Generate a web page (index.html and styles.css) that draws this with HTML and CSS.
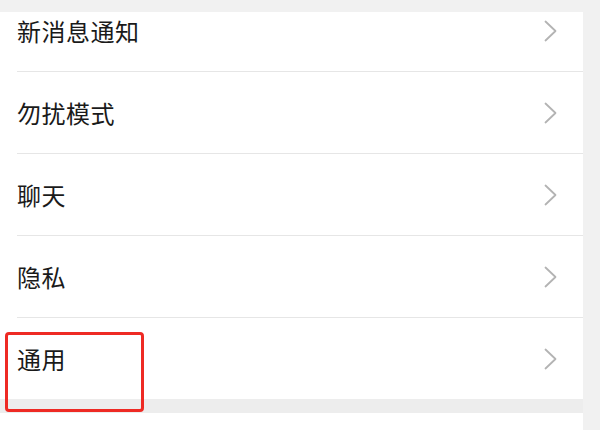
FILE: index.html
```html
<!DOCTYPE html>
<html lang="zh">
<head>
<meta charset="utf-8">
<link rel="stylesheet" href="styles.css">
</head>
<body>
<div class="page">
  <div class="panel">
    <div class="row first"><span class="label">新消息通知</span><svg class="chev" viewBox="0 0 13 22"><path d="M1.5 1.5 L11.5 11 L1.5 20.5" /></svg></div>
    <div class="row"><span class="label">勿扰模式</span><svg class="chev" viewBox="0 0 13 22"><path d="M1.5 1.5 L11.5 11 L1.5 20.5" /></svg></div>
    <div class="row"><span class="label">聊天</span><svg class="chev" viewBox="0 0 13 22"><path d="M1.5 1.5 L11.5 11 L1.5 20.5" /></svg></div>
    <div class="row"><span class="label">隐私</span><svg class="chev" viewBox="0 0 13 22"><path d="M1.5 1.5 L11.5 11 L1.5 20.5" /></svg></div>
    <div class="row last"><span class="label">通用</span><svg class="chev" viewBox="0 0 13 22"><path d="M1.5 1.5 L11.5 11 L1.5 20.5" /></svg></div>
    <div class="gap"></div>
    <div class="tail"></div>
    <div class="highlight"></div>
  </div>
</div>
</body>
</html>
```

FILE: styles.css
```css
html, body {
  margin: 0;
  padding: 0;
  background: #f1f1f1;
}
body {
  width: 600px;
  height: 430px;
  overflow: hidden;
  font-family: "Noto Sans CJK SC", "Noto Sans", sans-serif;
}
.page {
  padding-top: 12px;
  padding-right: 17px;
}
.panel {
  position: relative;
  background: #ffffff;
  width: 583px;
}
.row {
  height: 82px;
  margin-left: 17px;
  border-bottom: 1px solid #e6e6e6;
  box-sizing: border-box;
  display: flex;
  align-items: center;
  justify-content: space-between;
  padding-right: 26px;
}
.row.first {
  height: 60px;
  padding-bottom: 21px;
}
.row.last {
  height: 81px;
  border-bottom: none;
}
.label {
  font-size: 24px;
  line-height: 24px;
  color: #1a1a1a;
  letter-spacing: 0.5px;
}
.chev {
  width: 13px;
  height: 22px;
  fill: none;
  stroke: #b3b3b3;
  stroke-width: 1.8;
  stroke-linecap: round;
  stroke-linejoin: round;
}
.gap {
  height: 14px;
  background: #ededed;
}
.tail {
  height: 18px;
  background: #ffffff;
}
.highlight {
  position: absolute;
  left: 5px;
  top: 320px;
  width: 133px;
  height: 74px;
  border: 3px solid #ee2a24;
  border-radius: 4px;
}
```
